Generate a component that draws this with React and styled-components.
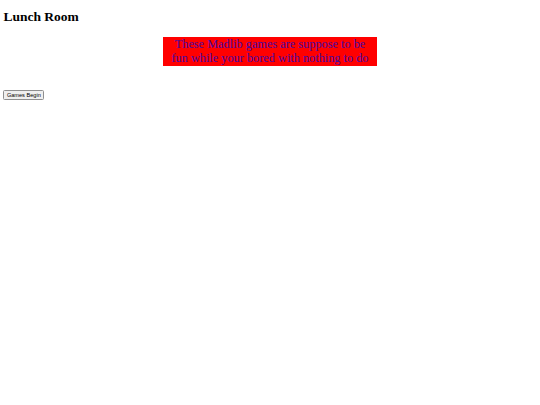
import React from 'react';
import styled, { createGlobalStyle } from 'styled-components';

const GlobalStyle = createGlobalStyle`
  body {
    margin: 3.4px;
    font-family: "Liberation Serif", "Times New Roman", serif;
    background: #fff;
    color: #000;
  }
`;

const Title = styled.h1`
  font-size: 13.5px;
  font-weight: bold;
  margin: 5.6px 0 12px;
`;

const Blurb = styled.p`
  width: 214px;
  margin: 0 auto;
  background: red;
  color: #4a0aa0;
  font-size: 12.3px;
  line-height: 14.5px;
  text-align: center;
  white-space: nowrap;
`;

const Actions = styled.div`
  margin-top: 17px;
`;

const StartButton = styled.button`
  font-family: "Liberation Sans", Arial, sans-serif;
  font-size: 5.6px;
  line-height: 1.15;
  padding: 1px 2.5px;
  border: 1px solid #8f8f8f;
  border-radius: 1.5px;
  background: #efefef;
  color: #000;
`;

export default function App() {
  return (
    <>
      <GlobalStyle />
      <Title>Lunch Room</Title>
      <Blurb>
        These Madlib games are suppose to be
        <br />
        fun while your bored with nothing to do
      </Blurb>
      <Actions>
        <StartButton>Games Begin</StartButton>
      </Actions>
    </>
  );
}
